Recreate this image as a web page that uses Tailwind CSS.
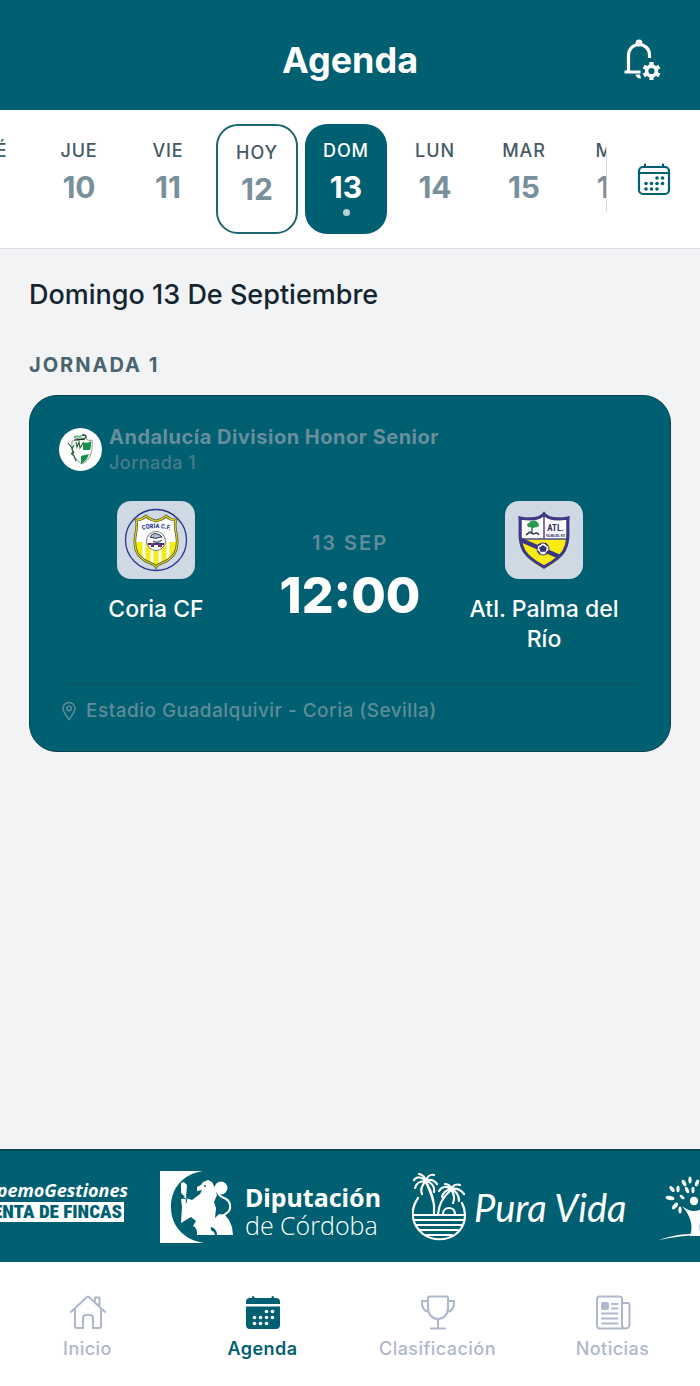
<!DOCTYPE html>
<html lang="es">
<head>
<meta charset="utf-8">
<meta name="viewport" content="width=device-width, initial-scale=1">
<title>Agenda</title>
<script src="https://cdn.jsdelivr.net/npm/@tailwindcss/browser@4"></script>
</head>
<body class="flex min-h-screen flex-col overflow-x-hidden bg-[#f1f3f5] font-['Inter',sans-serif] text-[#13252f]">

<header class="grid h-[110px] grid-cols-[1fr_auto_1fr] items-center bg-[#005f70] px-9 pt-2.5 text-white">
  <h1 class="col-start-2 text-[36px] leading-11 font-bold">Agenda</h1>
  <button type="button" aria-label="Ajustes de notificaciones" class="justify-self-end">
    <svg class="size-11" viewBox="0 0 44 44" fill="none" stroke="currentColor" stroke-width="3.200">
      <path d="M20.500 34H4.500M8.500 33V17.500C8.500 11 13 6.500 19 6.500S29.500 11 29.500 17v3"/>
      <circle cx="19" cy="5" r="3.400" fill="currentColor" stroke="none"/>
      <path d="M15.500 36.500h4.500l1 4c-3 .2-5-1.500-5.500-4z" fill="currentColor" stroke="none"/>
      <circle cx="31.500" cy="33" r="4.900" stroke-width="3.600"/>
      <path d="M31.500 24v3.500M31.500 38.500V42M23.700 28.500l3 1.800M36.300 35.700l3 1.800M23.700 37.500l3-1.800M36.300 30.300l3-1.800" stroke-width="4.200"/>
    </svg>
  </button>
</header>

<section aria-label="Días" class="flex items-center border-b border-[#dfe1e4] bg-white">
  <div class="min-w-0 flex-1 overflow-hidden">
    <div class="-ml-[51px] flex w-max gap-[7px] py-3.5 text-[#455a64]">
      <button type="button" class="flex h-[110px] w-[82px] flex-col items-center pt-[17px]"><span class="text-[18px] leading-5 font-medium tracking-wider">MIÉ</span><span class="mt-2 text-[30px] leading-9 font-bold text-[#78909c]">9</span></button>
      <button type="button" class="flex h-[110px] w-[82px] flex-col items-center pt-[17px]"><span class="text-[18px] leading-5 font-medium tracking-wider">JUE</span><span class="mt-2 text-[30px] leading-9 font-bold text-[#78909c]">10</span></button>
      <button type="button" class="flex h-[110px] w-[82px] flex-col items-center pt-[17px]"><span class="text-[18px] leading-5 font-medium tracking-wider">VIE</span><span class="mt-2 text-[30px] leading-9 font-bold text-[#78909c]">11</span></button>
      <button type="button" class="flex h-[110px] w-[82px] flex-col items-center rounded-[22px] border-2 border-[#1d6470] pt-[17px]"><span class="text-[18px] leading-5 font-medium tracking-wider">HOY</span><span class="mt-2 text-[30px] leading-9 font-bold text-[#78909c]">12</span></button>
      <button type="button" aria-pressed="true" class="flex h-[110px] w-[82px] flex-col items-center rounded-[22px] bg-[#005f70] pt-[17px] text-white"><span class="text-[18px] leading-5 font-medium tracking-wider">DOM</span><span class="mt-2 text-[30px] leading-9 font-bold">13</span><span class="mt-1 size-[7px] rounded-full bg-[#b5d0d8]"></span></button>
      <button type="button" class="flex h-[110px] w-[82px] flex-col items-center pt-[17px]"><span class="text-[18px] leading-5 font-medium tracking-wider">LUN</span><span class="mt-2 text-[30px] leading-9 font-bold text-[#78909c]">14</span></button>
      <button type="button" class="flex h-[110px] w-[82px] flex-col items-center pt-[17px]"><span class="text-[18px] leading-5 font-medium tracking-wider">MAR</span><span class="mt-2 text-[30px] leading-9 font-bold text-[#78909c]">15</span></button>
      <button type="button" class="flex h-[110px] w-[82px] flex-col items-center pt-[17px]"><span class="text-[18px] leading-5 font-medium tracking-wider">MIÉ</span><span class="mt-2 text-[30px] leading-9 font-bold text-[#78909c]">16</span></button>
    </div>
  </div>
  <button type="button" aria-label="Abrir calendario" class="flex h-[66px] w-[94px] shrink-0 items-center justify-center border-l border-[#d3d9df] text-[#005f70]">
    <svg class="size-9" viewBox="0 0 36 36" fill="none" stroke="currentColor" stroke-width="2.200" stroke-linecap="round">
      <rect x="3" y="6" width="30" height="27" rx="4"/>
      <path d="M3 12h30M9 3.500V6M27 3.500V6"/>
      <g fill="currentColor" stroke="none"><circle cx="21" cy="17" r="1.800"/><circle cx="26.500" cy="17" r="1.800"/><circle cx="10" cy="22.500" r="1.800"/><circle cx="15.500" cy="22.500" r="1.800"/><circle cx="21" cy="22.500" r="1.800"/><circle cx="26.500" cy="22.500" r="1.800"/><circle cx="10" cy="28" r="1.800"/><circle cx="15.500" cy="28" r="1.800"/><circle cx="21" cy="28" r="1.800"/></g>
    </svg>
  </button>
</section>

<main class="flex-1 px-[29px] pt-7 pb-10">
  <h2 class="text-[27px] leading-9 font-medium">Domingo 13 De Septiembre</h2>
  <h3 class="mt-10 text-[20px] leading-6 font-bold tracking-widest text-[#49636f]">JORNADA 1</h3>

  <article class="mt-[18px] rounded-[28px] border border-[#07414e] bg-[#005f70] px-[29px] pt-[29px] pb-[27px]">
    <div class="flex items-start gap-[7px]">
      <svg class="mt-[3px] size-[43px] shrink-0 rounded-full bg-white" viewBox="0 0 43 43" role="img" aria-label="Federación Andaluza">
        <path d="M13 13c-1 10 2 19 10 23 8-4 11-12 10-24-3 1-5 0-7-2-3 2-9 3-13 3z" fill="#fff" stroke="#6b8672" stroke-width=".8"/>
        <path d="M24 14c3 1 6 1 8-1 0 4 0 6-1 9h-7z" fill="#15924b"/>
        <path d="M22 28l8-2c-2 5-4 8-8 10z" fill="#15924b"/>
        <path d="M9 15l4 5 1 6M15 17l-2 4 2 4M12 25l3 3 2 5M17 14l1 5 2-5 1 6 3-5" fill="none" stroke="#25643c" stroke-width="1.200"/>
        <path d="M15 9c3-2 5 0 7-1s5-1 5 1-4 1-6 1-4 1-6-1z" fill="none" stroke="#27854d" stroke-width="1"/>
        <path d="M23 7c3-1 5 1 4 3M15 12c4-1 8 0 11-1" fill="none" stroke="#222" stroke-width="1.100"/>
      </svg>
      <div class="leading-[25px]">
        <p class="text-[20px] font-bold tracking-wide text-[#698e9e]">Andalucía Division Honor Senior</p>
        <p class="text-[18px] font-medium tracking-wide text-[#467c8c]">Jornada 1</p>
      </div>
    </div>

    <div class="mt-[26px] grid grid-cols-3 text-center text-white">
      <div class="flex flex-col items-center px-4">
        <svg class="size-[78px] rounded-[14px] bg-[#cfd9e3]" viewBox="0 0 78 78" role="img" aria-label="Escudo Coria CF">
          <circle cx="39" cy="39" r="30.500" fill="none" stroke="#26338a" stroke-width="1.300"/>
          <clipPath id="coria"><path d="M39 20c4-1 7-2 10-5 3 3 6 4 10 4-3 7 2 14 1 24 0 11-9 17-15 19-3 1-5 2-6 4-1-2-3-3-6-4-6-2-15-8-15-19-1-10 4-17 1-24 4 0 7-1 10-4 3 3 6 4 10 5z"/></clipPath>
          <g clip-path="url(#coria)">
            <path fill="#fff" d="M15 10h48v60H15z"/>
            <path fill="#f5ec16" d="M15 41h48v28H15z"/>
            <path d="M27 41v27M35 41v27M43 41v27M51 41v27" stroke="#fff" stroke-width="3"/>
          </g>
          <path d="M39 20c4-1 7-2 10-5 3 3 6 4 10 4-3 7 2 14 1 24 0 11-9 17-15 19-3 1-5 2-6 4-1-2-3-3-6-4-6-2-15-8-15-19-1-10 4-17 1-24 4 0 7-1 10-4 3 3 6 4 10 5z" fill="none" stroke="#53572f" stroke-width="2.600"/>
          <path d="M39 20c4-1 7-2 10-5 3 3 6 4 10 4-3 7 2 14 1 24 0 11-9 17-15 19-3 1-5 2-6 4-1-2-3-3-6-4-6-2-15-8-15-19-1-10 4-17 1-24 4 0 7-1 10-4 3 3 6 4 10 5z" fill="none" stroke="#ded21f" stroke-width="1.200"/>
          <path id="arc" d="M26 29Q39 25 53 29" fill="none"/>
          <text font-family="Roboto Condensed, Liberation Sans" font-size="6.500" font-weight="700" fill="#26338a" text-anchor="middle"><textPath href="#arc" startOffset="50%">CORIA C.F.</textPath></text>
          <circle cx="39" cy="40" r="9.500" fill="#fff" stroke="#777a82" stroke-width="1"/>
          <path d="M33 36c3-5 8-4 12 0-3 0-5 2-8 1zM36 40c3 2 6 2 9-1" fill="#b5bdc4" stroke="#26324e" stroke-width="1"/>
          <path d="M31 43h16M34 45h3M41 45h4" stroke="#27338a" stroke-width="2"/>
          <path d="M34 44l3-2M42 43l2 3" stroke="#c2303a" stroke-width="1.600"/>
        </svg>
        <p class="mt-[15px] text-[23px] leading-[30px] font-medium">Coria CF</p>
      </div>
      <div class="flex flex-col items-center justify-center pb-0.5">
        <p class="text-[20px] leading-7 font-semibold tracking-widest text-[#628b9b]">13 SEP</p>
        <p class="mt-2 text-[50px] leading-[60px] font-extrabold">12:00</p>
      </div>
      <div class="flex flex-col items-center px-4">
        <svg class="size-[78px] rounded-[14px] bg-[#cfd9e3]" viewBox="0 0 78 78" role="img" aria-label="Escudo Atl. Palma del Río">
          <clipPath id="palma"><path d="M39 12c3 4 12 6 25 4-1 12 2 23-4 34-5 9-14 14-21 18-7-4-16-9-21-18-6-11-3-22-4-34 13 2 22 0 25-4z"/></clipPath>
          <g clip-path="url(#palma)">
            <path fill="#fff" d="M12 10h54v29H12z"/><path fill="#f8ec14" d="M12 38h54v32H12z"/>
            <path d="M14 38h50M39 14v24" stroke="#4d4790" stroke-width="1.500"/>
            <path d="M16 39l39 17" stroke="#3c3584" stroke-width="4.500"/>
          </g>
          <path d="M39 13c3 4 11 6 24 4-1 12 2 22-4 33-5 8-13 12-20 16-7-4-15-8-20-16-6-11-3-21-4-33 13 2 21 0 24-4z" fill="none" stroke="#403a84" stroke-width="3.200"/>
          <path d="M27 20c-3 0-3 3-5 3 0 3 2 4 4 3 2 2 4 0 6 0 3 0 2-3 1-4-1-2-3-3-6-2z" fill="#2d9c51"/>
          <path d="M27 24v8" stroke="#397a4c" stroke-width="1.500"/>
          <path d="M21 34l4-3 3 2 4-1 2 2" fill="none" stroke="#443d62" stroke-width="1.600"/>
          <text x="50.500" y="30" text-anchor="middle" font-family="Roboto Condensed, Liberation Sans" font-size="9" font-weight="700" fill="#35336d">ATL.</text>
          <text x="50.500" y="35.500" text-anchor="middle" font-family="Roboto Condensed, Liberation Sans" font-size="3" font-weight="700" fill="#35336d">PALMA DEL RÍO</text>
          <circle cx="38" cy="48" r="6" fill="#fff" stroke="#3a367c" stroke-width="1"/>
          <path d="M38 45l3 2-1 3h-4l-1-3zM33 44l3-1M40 42l3 3M43 50l-2 3M35 53l-2-3" fill="#37336f" stroke="#37336f" stroke-width="1.500"/>
        </svg>
        <p class="mt-[15px] text-[23px] leading-[30px] font-medium">Atl. Palma del Río</p>
      </div>
    </div>

    <div class="mt-[29px] flex items-center gap-[7px] border-t border-[#0b5060] pt-3.5 text-[#5f8c9b]">
      <svg class="size-5 shrink-0" viewBox="0 0 20 20" fill="none" stroke="currentColor" stroke-width="1.500"><path d="M10 18.500C6 13 4 10.500 4 7.500a6 6 0 0 1 12 0c0 3-2 5.500-6 11z"/><circle cx="10" cy="7.500" r="2.200"/></svg>
      <p class="text-[19px] leading-[26px] font-medium tracking-wide">Estadio Guadalquivir - Coria (Sevilla)</p>
    </div>
  </article>
</main>

<section aria-label="Patrocinadores" class="flex h-[113px] items-center gap-8 overflow-hidden border-t-2 border-[#0a4350] bg-[#005f70] text-white">
  <div class="flex w-32 shrink-0 flex-col items-end gap-0.5 pb-3 whitespace-nowrap">
    <span class="font-['Open_Sans',sans-serif] text-[18px] leading-5 font-bold italic">SupemoGestiones</span>
    <span class="mr-1 bg-white px-0.5 font-['Roboto_Condensed',sans-serif] text-[19px] leading-5 font-black text-[#005f70]">VENTA DE FINCAS</span>
  </div>
  <div class="flex shrink-0 items-center gap-3">
    <svg class="h-[72px] w-[73px]" viewBox="0 0 73 72" fill="#fff">
      <path d="M0 0h43C23 3 11 17 11 36s13 33 33 36H0z"/>
      <path d="M21 12l3-1 3 3-1 13 6 2 8-6 2-4-5 1v-4l4-2 2-3 5-2 4 2 3 6 2 7-3 7 2 6-1 10 4-4 6 1 4 5 3 7 1 8H57c0-4-2-7-6-8-1 3 1 4 3 5l1 3H37c0-4 0-7-4-9l3-5-5-4-10 6 1-16-1-8 4-2-4-4z"/>
      <circle cx="61" cy="17" r="6.500"/>
      <path d="M58 22c2 4 4 4 8 6s6 9 2 13c-3 3-6 3-8 6" fill="none" stroke="#fff" stroke-width="2"/>
      <path d="M21 27l6 1-1 4" fill="none" stroke="#005f70"/>
      <circle cx="45" cy="15" r="1" fill="#005f70"/>
    </svg>
    <div class="w-[135px] pt-2 font-['Open_Sans',sans-serif] text-[25px] leading-7 whitespace-nowrap">
      <p class="font-['Noto_Sans',sans-serif] font-bold">Diputación</p>
      <p class="font-light">de Córdoba</p>
    </div>
  </div>
  <div class="flex shrink-0 items-center gap-2">
    <svg class="h-[68px] w-[54px]" viewBox="0 0 54 68" fill="none" stroke="#fff" stroke-width="2.200" stroke-linecap="round">
      <path d="M6 25C-3 38 0 52 11 61c9 7 24 7 33 0 10-8 11-21 6-31"/>
      <path d="M2 42h50M2 47h50M4 52h46M8 57h38M14 62h26" stroke-width="1.800"/>
      <path d="M14 9c5 8 9 20 8 32M38 18c-6 5-11 13-12 23M14 9c3 7 6 13 7 19"/>
      <path d="M14 8C10 4 5 3 2 7M14 8C9 8 4 10 3 15M14 8c-4 4-6 8-4 13M14 8c-1-4-3-6-7-7M14 8c1-4 4-7 8-6M14 8c4-2 8-1 11 3M14 8c5 1 9 5 8 11"/>
      <path d="M39 16c-4-3-9-3-12 2M39 16c-5 1-8 4-9 8M39 16c0-3-3-5-6-5M39 16c2-4 6-5 9-4M39 16c5-1 10 1 13 5M39 16c5 2 8 6 8 12M39 16c3 5 4 10 2 14"/>
      <path d="M31 41c0-8 12-8 12 0"/>
    </svg>
    <span class="w-[153px] font-['Lato',sans-serif] text-[38px] leading-[68px] font-normal whitespace-nowrap italic">Pura Vida</span>
  </div>
  <svg class="h-[68px] w-20 shrink-0" viewBox="0 0 80 68" fill="#fff">
    <path d="M0 67c22-8 44-8 76-2-26-4-50-4-76 2z"/>
    <path d="M31 63c3-10 2-18-8-30 5 4 9 5 12 5s8-1 14-6c-8 10-10 21-7 31z"/>
    <circle cx="35" cy="28" r="4.200"/>
    <g><ellipse cx="11" cy="25" rx="4.500" ry="2" transform="rotate(8 11 25)"/><ellipse cx="13" cy="16" rx="1.800" ry="3.500" transform="rotate(-40 13 16)"/><ellipse cx="19" cy="16" rx="1.600" ry="3.200"/><ellipse cx="25" cy="10" rx="1.800" ry="3.500" transform="rotate(-30 25 10)"/><ellipse cx="31" cy="7" rx="1.600" ry="3.500"/><ellipse cx="38" cy="10" rx="1.800" ry="3.500" transform="rotate(20 38 10)"/><ellipse cx="16" cy="33" rx="2" ry="4" transform="rotate(40 16 33)"/><ellipse cx="21" cy="37" rx="1.600" ry="3.500"/><ellipse cx="23" cy="24" rx="1.500" ry="3" transform="rotate(-50 23 24)"/><ellipse cx="28" cy="17" rx="1.700" ry="3.500" transform="rotate(-25 28 17)"/><ellipse cx="34" cy="17" rx="1.600" ry="3.200"/></g>
  </svg>
</section>

<nav aria-label="Principal" class="grid grid-cols-4 bg-white pt-8 pb-[25px] text-[18px] leading-6 font-medium tracking-wide text-[#afb7cb]">
  <a href="#inicio" class="flex flex-col items-center gap-[7px]">
    <svg class="size-9" viewBox="0 0 36 36" fill="none" stroke="currentColor" stroke-width="2" stroke-linecap="round" stroke-linejoin="round"><path d="M1 18L17 3q1-1 2 0l16 15M5 15v17q0 2 2 2h6V24q0-3 3-3h4q3 0 3 3v10h6q2 0 2-2V15M25 8V3.500h4.500V12"/></svg>
    Inicio</a>
  <a href="#agenda" aria-current="page" class="flex flex-col items-center gap-[7px] font-semibold text-[#005f70]">
    <svg class="size-9" viewBox="0 0 36 36" fill="currentColor"><path d="M1 10V8q0-4 4-4h2V3q1-2 2.500 0v1h17V3q1.200-2 2.500 0v1h2q4 0 4 4v2zM1 12.500h34V31q0 4-4 4H5q-4 0-4-4z"/><g fill="#fff"><circle cx="21.500" cy="17.500" r="1.800"/><circle cx="27.500" cy="17.500" r="1.800"/><circle cx="9.500" cy="23.500" r="1.800"/><circle cx="15.500" cy="23.500" r="1.800"/><circle cx="21.500" cy="23.500" r="1.800"/><circle cx="27.500" cy="23.500" r="1.800"/><circle cx="9.500" cy="29.500" r="1.800"/><circle cx="15.500" cy="29.500" r="1.800"/><circle cx="21.500" cy="29.500" r="1.800"/></g></svg>
    Agenda</a>
  <a href="#clasificacion" class="flex flex-col items-center gap-[7px]">
    <svg class="size-9" viewBox="0 0 36 36" fill="none" stroke="currentColor" stroke-width="2" stroke-linecap="round" stroke-linejoin="round"><path d="M9.500 2.500h17q1.500 0 1.500 1.500v10c0 6-4 11-10 11S8 20 8 14V4q0-1.500 1.500-1.500zM18 25v9.500M11 34.500h14M8 7H2c-.5 6 2 10 7 11M28 7h6c.5 6-2 10-7 11"/></svg>
    Clasificación</a>
  <a href="#noticias" class="flex flex-col items-center gap-[7px]">
    <svg class="size-9" viewBox="0 0 36 36" fill="none" stroke="currentColor" stroke-width="2" stroke-linecap="round" stroke-linejoin="round"><path d="M30 34.500H5q-3 0-3-3V5q0-2.500 2.500-2.500h20Q27 2.500 27 5v26q0 3.500 3.500 3.500T34.500 31V11q0-2-2-2H27M17 10h5.500M17 14.500h5.500M7 19.500h15.500M7 24.500h15.500M7 29.500h15.500"/><rect x="6" y="8" width="8" height="8" rx="2" fill="currentColor" stroke="none"/></svg>
    Noticias</a>
</nav>
</body>
</html>
